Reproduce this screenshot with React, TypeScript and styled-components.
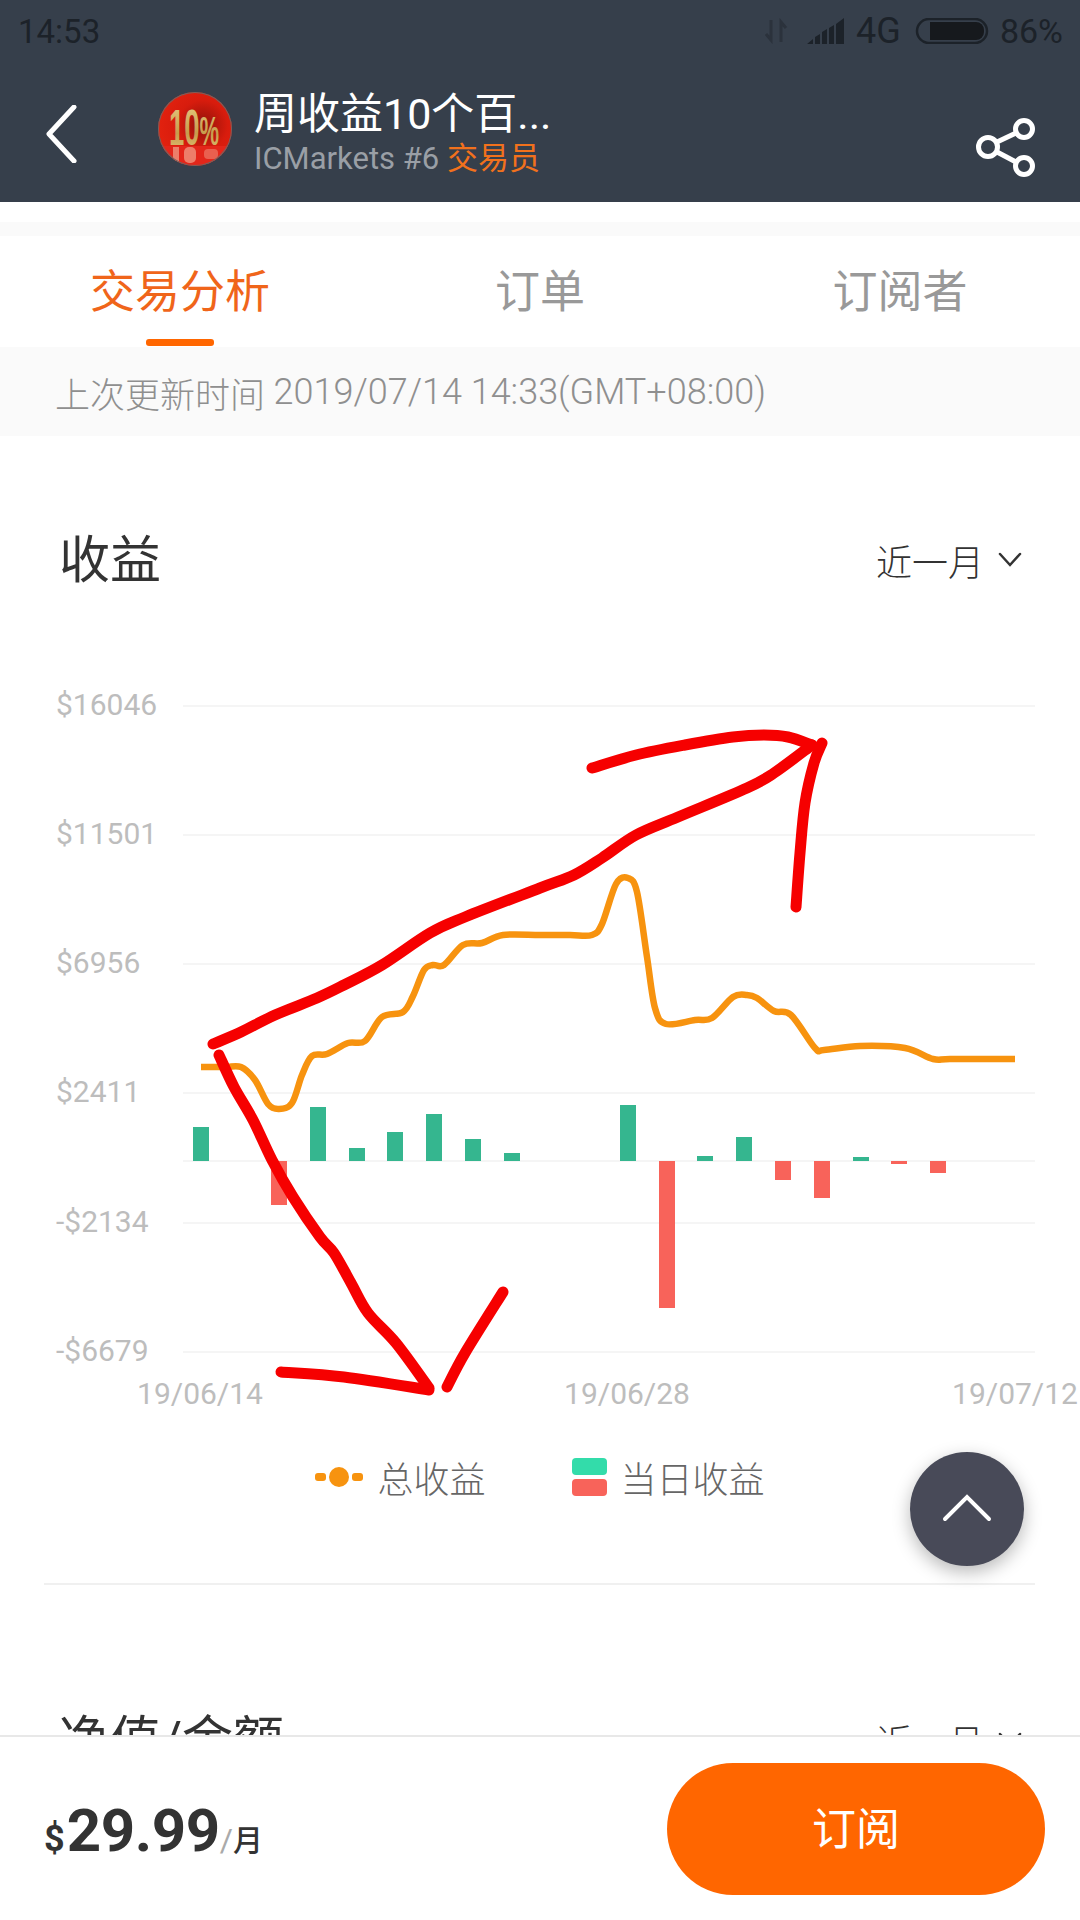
import React from "react";
import styled, { createGlobalStyle } from "styled-components";

const CHART_TOP = 609;
const CHART_HEIGHT = 821;
const ZERO_Y = 1161;

const yAxis = [
  { label: "$16046", y: 706 },
  { label: "$11501", y: 835 },
  { label: "$6956", y: 964 },
  { label: "$2411", y: 1093 },
  { label: "-$2134", y: 1223 },
  { label: "-$6679", y: 1352 },
];

const xAxis = [
  { label: "19/06/14", x: 200 },
  { label: "19/06/28", x: 627 },
  { label: "19/07/12", x: 1015 },
];

// x of the bar's left edge, y of its free end
const bars = [
  [193, 1127], [271, 1205], [310, 1107], [349, 1148], [387, 1132], [426, 1114],
  [465, 1139], [504, 1153], [620, 1105], [659, 1308], [697, 1156], [736, 1137],
  [775, 1180], [814, 1198], [853, 1157], [891, 1164], [930, 1173],
];

const totalLine = [
  [201, 1067], [225, 1067], [241, 1067], [255, 1080], [268, 1104], [279, 1109], [292, 1103], [302, 1075], [312, 1056],
  [327, 1054], [348, 1043], [365, 1041], [382, 1017], [403, 1012], [413, 996], [424, 970], [433, 965], [444, 965],
  [463, 945], [482, 943], [503, 935], [540, 935], [570, 935], [592, 935], [602, 924], [616, 884],
  [628, 878], [637, 892], [647, 957], [655, 1008], [666, 1024], [695, 1020], [712, 1018],
  [733, 997], [747, 995], [757, 998], [774, 1011], [791, 1015], [815, 1048], [824, 1050],
  [860, 1046], [905, 1048], [933, 1059], [950, 1059], [1000, 1059], [1015, 1059],
];

const scribbles = [
  [[213, 1044], [241, 1032], [275, 1015], [317, 998], [344, 985], [382, 965], [430, 933], [465, 917], [540, 888], [574, 875], [602, 858], [636, 835], [678, 817], [747, 788], [774, 773], [812, 745]],
  [[592, 768], [636, 755], [685, 745], [733, 737], [764, 735], [788, 737], [812, 745]],
  [[822, 743], [814, 763], [805, 803], [800, 853], [796, 907]],
  [[219, 1055], [234, 1087], [253, 1120], [272, 1160], [293, 1197], [320, 1237], [334, 1253], [351, 1283], [368, 1313], [396, 1343], [429, 1388]],
  [[281, 1372], [344, 1377], [429, 1390]],
  [[447, 1387], [465, 1353], [503, 1292]],
];

// catmull-rom through the points, good enough for the chart curves
const smooth = (pts: number[][]) => {
  let d = `M${pts[0][0]} ${pts[0][1]}`;
  for (let i = 0; i < pts.length - 1; i++) {
    const p0 = pts[Math.max(i - 1, 0)];
    const p1 = pts[i];
    const p2 = pts[i + 1];
    const p3 = pts[Math.min(i + 2, pts.length - 1)];
    const c1x = p1[0] + (p2[0] - p0[0]) / 6;
    const c1y = p1[1] + (p2[1] - p0[1]) / 6;
    const c2x = p2[0] - (p3[0] - p1[0]) / 6;
    const c2y = p2[1] - (p3[1] - p1[1]) / 6;
    d += ` C${c1x} ${c1y} ${c2x} ${c2y} ${p2[0]} ${p2[1]}`;
  }
  return d;
};

const StatusIcons = () => (
  <svg width="224" height="26" viewBox="0 0 224 26">
    <path d="M6 2v20l-5-6M16 24V4l5 6" fill="none" stroke="#2b323c" strokeWidth="3" />
    <path d="M42 26l6-5v5zM50 19l5-3v10h-5zM57 14l5-3v15h-5zM64 10l5-3v19h-5zM71 6l8-6v26h-8z" fill="#1c2229" />
    <rect x="152" y="1" width="70" height="24" rx="12" fill="none" stroke="#1c2229" strokeWidth="2.5" />
    <path d="M165 4h46a8 8 0 0 1 8 8v2a8 8 0 0 1-8 8h-46z" fill="#16191d" />
  </svg>
);

const BackIcon = () => (
  <svg width="32" height="58" viewBox="0 0 32 58">
    <path d="M29 2L4 29l25 27" fill="none" stroke="#fff" strokeWidth="5" strokeLinecap="round" strokeLinejoin="round" />
  </svg>
);

const ShareIcon = () => (
  <svg width="62" height="60" viewBox="0 0 62 60" fill="none" stroke="#fff" strokeWidth="5">
    <circle cx="13" cy="29" r="9.5" />
    <circle cx="49" cy="11" r="8.5" />
    <circle cx="49" cy="48" r="8.5" />
    <path d="M22 24l19-9M22 34l19 10" />
  </svg>
);

const Chevron = () => (
  <svg width="24" height="16" viewBox="0 0 24 16">
    <path d="M2 2l10 11L22 2" fill="none" stroke="#333" strokeWidth="2.5" strokeLinecap="round" />
  </svg>
);

const LineKey = () => (
  <svg width="48" height="20" viewBox="0 0 48 20">
    <rect y="6" width="11" height="8" rx="3" fill="#f7930f" />
    <rect x="37" y="6" width="11" height="8" rx="3" fill="#f7930f" />
    <circle cx="24" cy="10" r="10" fill="#f7930f" />
  </svg>
);

// the trader's badge, a small picture of a gold 10% on red
const AvatarBadge = () => (
  <svg width="76" height="76" viewBox="0 0 76 76">
    <defs>
      <linearGradient id="badgeGold" x1="0" y1="0" x2="0" y2="1">
        <stop offset="0" stopColor="#e9cf86" />
        <stop offset="0.6" stopColor="#c79c4c" />
        <stop offset="1" stopColor="#e3c67c" />
      </linearGradient>
      <radialGradient id="badgeRed" cx="0.6" cy="0.45" r="0.6">
        <stop offset="0" stopColor="#8f120a" />
        <stop offset="0.55" stopColor="#d81c0d" />
        <stop offset="1" stopColor="#e3220f" />
      </radialGradient>
      <clipPath id="badgeClip">
        <circle cx="38" cy="38" r="37" />
      </clipPath>
    </defs>
    <g clipPath="url(#badgeClip)">
      <rect width="76" height="76" fill="url(#badgeRed)" />
      <rect y="55" width="76" height="21" fill="#e3261a" />
      {/* blurry reflection under the digits */}
      <rect x="16" y="56" width="6" height="16" fill="#f3b9a0" opacity="0.6" />
      <rect x="27" y="56" width="12" height="16" rx="5" fill="#f3b9a0" opacity="0.6" />
      <rect x="47" y="58" width="14" height="10" rx="4" fill="#f3b9a0" opacity="0.4" />
      <BadgeText transform="translate(12 54) scale(0.55 1)" fontSize="50" fill="url(#badgeGold)">
        10<tspan fontSize="40">%</tspan>
      </BadgeText>
      <circle cx="38" cy="38" r="37" fill="none" stroke="#77625f" strokeWidth="2" />
    </g>
  </svg>
);

const Chart = () => (
  <ChartSvg viewBox={`0 ${CHART_TOP} 1080 ${CHART_HEIGHT}`}>
    {[...yAxis, { label: "", y: ZERO_Y }].map((row) => (
      <g key={row.y}>
        <line x1="183" x2="1035" y1={row.y} y2={row.y} stroke="#f5f5f5" strokeWidth="2" />
        {row.label && (
          <AxisText x="56" y={row.y + 9}>
            {row.label}
          </AxisText>
        )}
      </g>
    ))}
    {xAxis.map((tick) => (
      <AxisText key={tick.label} x={tick.x} y="1404" textAnchor="middle">
        {tick.label}
      </AxisText>
    ))}
    {bars.map(([x, end]) => (
      <rect
        key={x}
        x={x}
        y={Math.min(end, ZERO_Y)}
        width="16"
        height={Math.abs(end - ZERO_Y)}
        fill={end < ZERO_Y ? "#35b68f" : "#f8635a"}
      />
    ))}
    <path d={smooth(totalLine)} fill="none" stroke="#f7930f" strokeWidth="6.5" />
    {scribbles.map((pts) => (
      <path
        key={pts[0][0]}
        d={smooth(pts)}
        fill="none"
        stroke="#f60000"
        strokeWidth="11"
        strokeLinecap="round"
        strokeLinejoin="round"
      />
    ))}
  </ChartSvg>
);

export default function App() {
  return (
    <Page>
      <GlobalStyle />
      <Header>
        <StatusBar>
          <Clock>14:53</Clock>
          <StatusRight>
            <StatusIcons />
            <StatusLabels>
              <NetworkLabel>4G</NetworkLabel>
              <BatteryLabel>86%</BatteryLabel>
            </StatusLabels>
          </StatusRight>
        </StatusBar>
        <NavBar>
          <BackSlot>
            <BackIcon />
          </BackSlot>
          <Avatar>
            <AvatarBadge />
          </Avatar>
          <TitleBlock>
            <Title>周收益10个百...</Title>
            <Subtitle>
              ICMarkets #6 <Role>交易员</Role>
            </Subtitle>
          </TitleBlock>
          <ShareSlot>
            <ShareIcon />
          </ShareSlot>
        </NavBar>
      </Header>
      <Band />
      <Tabs>
        <Tab $active>
          交易分析
          <TabMarker />
        </Tab>
        <Tab>订单</Tab>
        <Tab>订阅者</Tab>
      </Tabs>
      <UpdateBar>
        上次更新时间&nbsp;<UpdateTime>2019/07/14 14:33(GMT+08:00)</UpdateTime>
      </UpdateBar>
      <SectionHeader>
        <SectionTitle>收益</SectionTitle>
        <RangePicker>
          近一月
          <Chevron />
        </RangePicker>
      </SectionHeader>
      <Chart />
      <Legend>
        <LegendItem>
          <LineKey />
          总收益
        </LegendItem>
        <LegendItem>
          <Swatches>
            <Swatch $color="#33dcaa" />
            <Swatch $color="#f8635a" />
          </Swatches>
          当日收益
        </LegendItem>
      </Legend>
      <Divider />
      <NextSection>
        <SectionTitle>净值/金额</SectionTitle>
        <RangePicker>
          近一月
          <Chevron />
        </RangePicker>
      </NextSection>
      <ScrollTop>
        <svg width="50" height="28" viewBox="0 0 50 28">
          <path d="M3 25L25 3l22 22" fill="none" stroke="#fff" strokeWidth="4" strokeLinecap="round" />
        </svg>
      </ScrollTop>
      <BottomBar>
        <Price>
          <Currency>$</Currency>
          <Amount>29.99</Amount>
          <Slash>/</Slash>
          <Period>月</Period>
        </Price>
        <SubscribeButton>订阅</SubscribeButton>
      </BottomBar>
    </Page>
  );
}

const GlobalStyle = createGlobalStyle`
  html, body {
    margin: 0;
    padding: 0;
    background: #fff;
  }
`;

const Page = styled.div`
  position: relative;
  width: 1080px;
  height: 1920px;
  overflow: hidden;
  background: #fff;
  font-family: Roboto, "Noto Sans CJK SC", sans-serif;
`;

const Header = styled.header`
  height: 202px;
  background: #363f4b;
`;

const StatusBar = styled.div`
  display: flex;
  justify-content: space-between;
  align-items: center;
  height: 62px;
  padding: 0 17px 0 18px;
  color: #1c2229;
`;

const Clock = styled.span`
  font-size: 33px;
`;

const StatusRight = styled.div`
  position: relative;
  display: flex;
  align-items: center;
  width: 298px;
  height: 26px;
`;

const StatusLabels = styled.div`
  position: absolute;
  inset: 0;
  font-size: 34px;
  line-height: 26px;
`;

const NetworkLabel = styled.span`
  position: absolute;
  left: 91px;
  font-size: 36px;
`;

const BatteryLabel = styled.span`
  position: absolute;
  right: 0;
`;

const NavBar = styled.div`
  display: flex;
  align-items: flex-start;
  height: 140px;
`;

const BackSlot = styled.div`
  width: 157px;
  padding: 43px 0 0 45px;
  box-sizing: border-box;
`;

const Avatar = styled.div`
  flex: none;
  width: 76px;
  height: 76px;
  margin-top: 29px;
`;

const BadgeText = styled.text`
  font-family: "Liberation Sans", sans-serif;
  font-weight: 700;
`;

const TitleBlock = styled.div`
  margin-left: 21px;
  padding-top: 27px;
`;

const Title = styled.div`
  font-size: 43px;
  line-height: 50px;
  color: #fff;
`;

const Subtitle = styled.div`
  margin-top: 2px;
  font-size: 31px;
  line-height: 36px;
  color: #9a9fa6;
`;

const Role = styled.span`
  color: #f2711c;
`;

const ShareSlot = styled.div`
  margin-left: auto;
  padding: 56px 43px 0 0;
`;

const Band = styled.div`
  height: 14px;
  margin-top: 20px;
  background: #fafafa;
`;

const Tabs = styled.nav`
  display: grid;
  grid-template-columns: repeat(3, 1fr);
  height: 111px;
`;

const Tab = styled.div<{ $active?: boolean }>`
  position: relative;
  display: flex;
  justify-content: center;
  align-items: center;
  padding-bottom: 6px;
  font-size: 45px;
  color: ${(p) => (p.$active ? "#f0651a" : "#999")};
`;

const TabMarker = styled.span`
  position: absolute;
  left: 146px;
  bottom: 1px;
  width: 68px;
  height: 7px;
  border-radius: 3px;
  background: #ff6600;
`;

const UpdateBar = styled.div`
  display: flex;
  align-items: center;
  height: 89px;
  padding: 1px 0 0 55px;
  box-sizing: border-box;
  background: #fafafa;
  font-size: 35px;
  font-weight: 300;
  color: #8f8f8f;
`;

const UpdateTime = styled.span`
  font-size: 36px;
`;

const SectionHeader = styled.div`
  display: flex;
  justify-content: space-between;
  align-items: center;
  height: 100px;
  margin-top: 73px;
  padding: 0 58px 0 59px;
`;

const NextSection = styled(SectionHeader)`
  margin-top: 104px;
`;

const SectionTitle = styled.div`
  margin-top: -7px;
  font-size: 51px;
  color: #333;
`;

const RangePicker = styled.div`
  display: flex;
  align-items: center;
  gap: 14px;
  margin-top: 1px;
  font-size: 36px;
  font-weight: 300;
  color: #333;
`;

const ChartSvg = styled.svg`
  display: block;
  width: 1080px;
  height: ${CHART_HEIGHT}px;
`;

const AxisText = styled.text`
  font-family: Roboto, sans-serif;
  font-size: 30px;
  fill: #bdbdbd;
`;

const Legend = styled.div`
  display: flex;
  justify-content: center;
  align-items: center;
  gap: 86px;
  height: 96px;
  padding-bottom: 3px;
  box-sizing: border-box;
`;

const LegendItem = styled.div`
  display: flex;
  align-items: center;
  gap: 14px;
  font-size: 36px;
  font-weight: 300;
  color: #666;
`;

const Swatches = styled.div`
  display: flex;
  flex-direction: column;
  gap: 4px;
`;

const Swatch = styled.span<{ $color: string }>`
  width: 35px;
  height: 17px;
  border-radius: 4px;
  background: ${(p) => p.$color};
`;

const Divider = styled.div`
  height: 2px;
  margin: 57px 45px 0 44px;
  background: #f0f0f0;
`;

const ScrollTop = styled.div`
  position: absolute;
  left: 910px;
  top: 1452px;
  display: flex;
  justify-content: center;
  align-items: center;
  width: 114px;
  height: 114px;
  padding-bottom: 2px;
  box-sizing: border-box;
  border-radius: 50%;
  background: #484a58;
  box-shadow: 0 6px 18px rgba(0, 0, 0, 0.28);
`;

const BottomBar = styled.footer`
  position: absolute;
  left: 0;
  right: 0;
  bottom: 0;
  display: flex;
  justify-content: space-between;
  align-items: center;
  height: 185px;
  padding: 0 35px 0 44px;
  box-sizing: border-box;
  border-top: 2px solid #e8e8e8;
  background: #fff;
`;

const Price = styled.div`
  display: flex;
  align-items: baseline;
  margin-top: 3px;
  color: #333;
  font-weight: 700;
`;

const Currency = styled.span`
  font-size: 36px;
`;

const Amount = styled.span`
  font-size: 60px;
  letter-spacing: -0.4px;
  margin-left: 2px;
`;

const Slash = styled.span`
  font-size: 32px;
  font-weight: 400;
  color: #aaa;
`;

const Period = styled.span`
  font-size: 30px;
  font-weight: 500;
`;

const SubscribeButton = styled.button`
  width: 378px;
  height: 132px;
  padding: 0 0 6px;
  border: 0;
  border-radius: 66px;
  background: #ff6600;
  color: #fff;
  font-family: inherit;
  font-size: 44px;
`;
